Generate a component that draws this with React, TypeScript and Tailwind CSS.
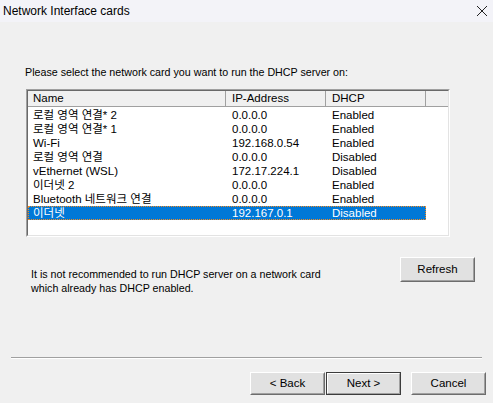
import React from 'react'

const rows = [
  { name: '로컬 영역 연결* 2', ip: '0.0.0.0', dhcp: 'Enabled' },
  { name: '로컬 영역 연결* 1', ip: '0.0.0.0', dhcp: 'Enabled' },
  { name: 'Wi-Fi', ip: '192.168.0.54', dhcp: 'Enabled' },
  { name: '로컬 영역 연결', ip: '0.0.0.0', dhcp: 'Disabled' },
  { name: 'vEthernet (WSL)', ip: '172.17.224.1', dhcp: 'Disabled' },
  { name: '이더넷 2', ip: '0.0.0.0', dhcp: 'Enabled' },
  { name: 'Bluetooth 네트워크 연결', ip: '0.0.0.0', dhcp: 'Enabled' },
  { name: '이더넷', ip: '192.167.0.1', dhcp: 'Disabled' },
]

const font = { fontFamily: '"Liberation Sans", "Noto Sans CJK KR", sans-serif' }

// Classic win32 push button
const Button = ({ label, isDefault = false, className = '' }: { label: string; isDefault?: boolean; className?: string }) => (
  <div
    className={`flex items-center justify-center bg-[#e1e1e1] text-[11.5px] text-black ${
      isDefault ? 'border border-[#3c3c3c]' : 'border border-t-white border-l-white border-b-[#6d6d6d] border-r-[#6d6d6d]'
    } ${className}`}
  >
    <div className={`flex h-full w-full items-center justify-center ${isDefault ? 'border border-t-white border-l-white border-b-[#a0a0a0] border-r-[#a0a0a0]' : 'border border-transparent border-b-[#a0a0a0] border-r-[#a0a0a0]'}`}>
      {label}
    </div>
  </div>
)

const App: React.FC = () => {
  return (
    <div className="flex h-[403px] w-[493px] flex-col bg-[#f0f0f0] text-black" style={font}>
      {/* Title bar */}
      <div className="flex h-[22px] items-center justify-between bg-[#f3f3f8] pl-[3px] pr-[3px]">
        <span className="text-[12px]">Network Interface cards</span>
        <svg width="12" height="12" viewBox="0 0 12 12" className="mr-[2px]">
          <path d="M1 1 L11 11 M11 1 L1 11" stroke="#222" strokeWidth="1" />
        </svg>
      </div>

      <div className="flex flex-1 flex-col">
        <p className="ml-[25px] mt-[44px] text-[10.7px] leading-[13px]">
          Please select the network card you want to run the DHCP server on:
        </p>

        {/* List view */}
        <div className="ml-[26px] mt-[10px] h-[148px] w-[424px] border border-t-[#a0a0a0] border-l-[#a0a0a0] border-b-white border-r-white">
          <div className="h-full w-full border border-t-[#696969] border-l-[#696969] border-b-[#e3e3e3] border-r-[#e3e3e3] bg-white">
            <div className="flex h-[16px] text-[11.5px] leading-[14px]">
              <div className="w-[198px] border-b border-r border-b-[#a0a0a0] border-r-[#a0a0a0] bg-[#f0f0f0] pl-[5px]">Name</div>
              <div className="w-[100px] border-b border-r border-b-[#a0a0a0] border-r-[#a0a0a0] bg-[#f0f0f0] pl-[6px]">IP-Address</div>
              <div className="w-[100px] border-b border-r border-b-[#a0a0a0] border-r-[#a0a0a0] bg-[#f0f0f0] pl-[6px]">DHCP</div>
              <div className="flex-1 border-b border-b-[#a0a0a0] bg-[#f0f0f0]" />
            </div>
            <div className="pt-[1px]">
              {rows.map((r, i) => {
                const selected = i === rows.length - 1
                return (
                  <div
                    key={i}
                    className={`flex h-[14px] w-[398px] text-[11.5px] leading-[13px] ${
                      selected ? 'border border-dotted border-[#f58a1e] bg-[#0078d7] text-white' : 'border border-transparent'
                    }`}
                  >
                    <div className="w-[197px] truncate pl-[4px]">{r.name}</div>
                    <div className="w-[100px] pl-[6px]">{r.ip}</div>
                    <div className="w-[99px] pl-[6px]">{r.dhcp}</div>
                  </div>
                )
              })}
            </div>
          </div>
        </div>

        {/* Note + refresh */}
        <div className="mt-[20px] flex">
          <p className="ml-[31px] mt-[10px] w-[300px] text-[10.7px] leading-[14px]">
            It is not recommended to run DHCP server on a network card which already has DHCP enabled.
          </p>
          <Button label="Refresh" className="ml-auto mr-[18px] h-[25px] w-[75px]" />
        </div>

        <div className="flex-1" />

        {/* Separator */}
        <div className="mx-[11px] h-[2px] border-t border-b border-t-[#a0a0a0] border-b-white" />

        <div className="mb-[8px] mt-[13px] flex pr-[7px]">
          <div className="ml-auto flex">
            <Button label="< Back" className="h-[23px] w-[75px]" />
            <Button label="Next >" isDefault className="ml-[1px] h-[23px] w-[75px]" />
          </div>
          <Button label="Cancel" className="ml-[10px] h-[23px] w-[75px]" />
        </div>
      </div>
    </div>
  )
}

export default App
